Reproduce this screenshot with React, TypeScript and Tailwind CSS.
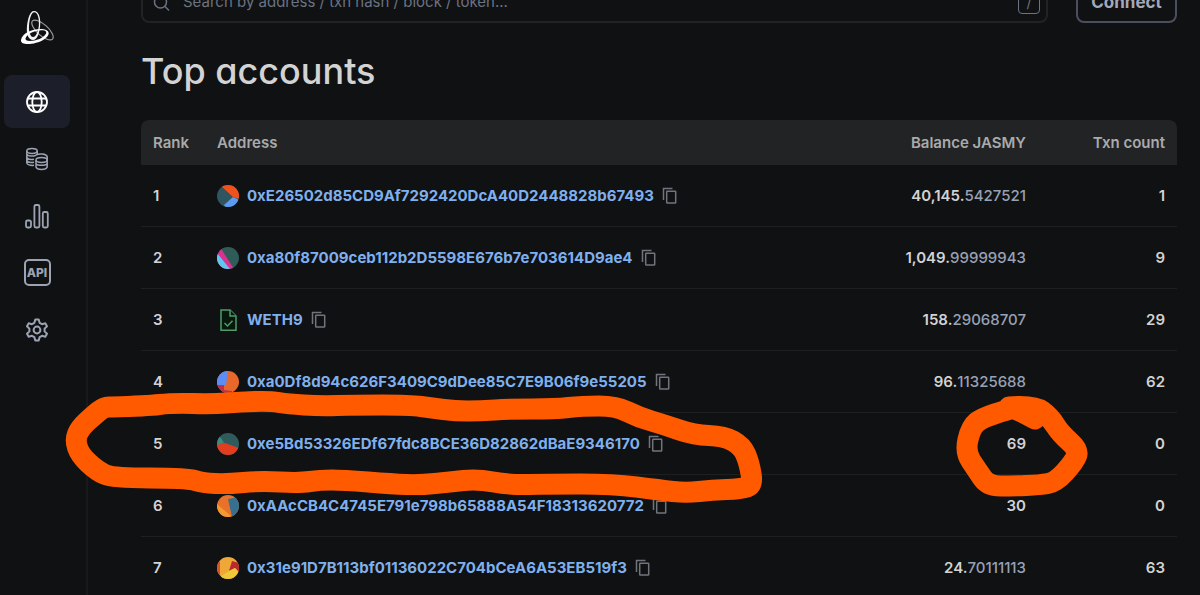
import type { ReactNode } from 'react'

type Slice = { d: string; fill: string }

type Account = {
  address: string
  whole: string
  fraction?: string
  txns: number
  base?: string
  slices?: Slice[]
}

const accounts: Account[] = [
  {
    address: '0xE26502d85CD9Af7292420DcA40D2448828b67493',
    whole: '40,145',
    fraction: '5427521',
    txns: 1,
    base: '#2f5560',
    slices: [
      { d: 'M3 0H22V14L16 12Z', fill: '#f1511b' },
      { d: 'M16 12L22 15V22H8L7 20Z', fill: '#5c9bf0' },
    ],
  },
  {
    address: '0xa80f87009ceb112b2D5598E676b7e703614D9ae4',
    whole: '1,049',
    fraction: '99999943',
    txns: 9,
    base: '#2f5b58',
    slices: [
      { d: 'M0 0H3L17 22H0Z', fill: '#d9328f' },
      { d: 'M0 6L13 22H0Z', fill: '#62c6f2' },
    ],
  },
  { address: 'WETH9', whole: '158', fraction: '29068707', txns: 29 },
  {
    address: '0xa0Df8d94c626F3409C9dDee85C7E9B06f9e55205',
    whole: '96',
    fraction: '11325688',
    txns: 62,
    base: '#e8672a',
    slices: [
      { d: 'M0 0H11L9 14H0Z', fill: '#5b8df5' },
      { d: 'M0 14H7V19L15 20V22H0Z', fill: '#c22f4b' },
    ],
  },
  {
    address: '0xe5Bd53326EDf67fdc8BCE36D82862dBaE9346170',
    whole: '69',
    txns: 0,
    base: '#2f5b5c',
    slices: [
      { d: 'M0 3L4 5L7 10L0 13Z', fill: '#3f8a7c' },
      { d: 'M0 12L8 10L22 15V22H0Z', fill: '#e33d20' },
    ],
  },
  {
    address: '0xAAcCB4C4745E791e798b65888A54F18313620772',
    whole: '30',
    txns: 0,
    base: '#e8722a',
    slices: [
      { d: 'M0 9L15 22H0Z', fill: '#f39a2e' },
      { d: 'M11 4L22 2V22H15Z', fill: '#37708f' },
    ],
  },
  {
    address: '0x31e91D7B113bf01136022C704bCeA6A53EB519f3',
    whole: '24',
    fraction: '70111113',
    txns: 63,
    base: '#efa738',
    slices: [
      { d: 'M0 5H3V18H0Z', fill: '#d9522c' },
      { d: 'M15 4L22 6V15L18 11L12 14Z', fill: '#b82a2e' },
      { d: 'M3 20L12 14L18 11L22 16V22H3Z', fill: '#f0c93a' },
    ],
  },
]

const rowMarker = [
  [112, 407], [147, 406], [172, 403], [213, 404], [240, 402], [270, 401], [288, 404], [320, 406],
  [355, 405], [410, 405], [432, 408], [455, 411], [480, 411], [510, 409], [555, 409], [582, 406],
  [616, 406], [638, 417], [665, 425], [694, 435], [724, 436], [742, 446], [749, 462], [753, 485],
  [741, 489], [712, 490], [686, 493], [660, 490], [613, 484], [547, 484], [510, 485], [477, 479],
  [450, 482], [420, 485], [393, 484], [343, 480], [320, 480], [300, 483], [260, 481], [227, 484],
  [203, 483], [187, 478], [113, 478], [97, 471], [80, 455], [75, 440], [80, 428], [93, 416], [104, 407], [113, 407],
]

const balanceMarker = [
  [1009, 407], [1034, 405], [1050, 417], [1060, 433], [1079, 450], [1074, 462], [1056, 482],
  [1040, 485], [1013, 486], [988, 486], [977, 470], [965, 452], [971, 427], [982, 418], [1007, 410],
  [1014, 408], [1035, 419],
]

function smooth(points: number[][]) {
  let d = `M${points[0][0]} ${points[0][1]}`
  for (let i = 1; i < points.length - 1; i++) {
    const [x, y] = points[i]
    const [nx, ny] = points[i + 1]
    d += `Q${x} ${y} ${(x + nx) / 2} ${(y + ny) / 2}`
  }
  const last = points[points.length - 1]
  return `${d}L${last[0]} ${last[1]}`
}

function Logo() {
  return (
    <svg width="36" height="36" viewBox="0 0 36 36" fill="none">
      <ellipse cx="23.500" cy="20" rx="5.500" ry="13.500" stroke="#9a9c9f" strokeWidth="1.2" transform="rotate(-48 23.500 20)" />
      <path
        fillRule="evenodd"
        fill="#f2f2f2"
        d="M15 1C20 1 22 8 21 17C20 24 18 30 14 30C10 30 7 25 8 16C9 8 11 1 15 1ZM15.300 2.200C12.500 2.200 10.500 8 10 16C9.600 22 11.500 27 14 27C17 27 19 22 19.800 16C20.500 8 18.500 2.200 15.300 2.200Z"
      />
      <path
        fillRule="evenodd"
        fill="#fff"
        d="M2 30C3 23 14 18.500 23 19C31 19.500 32 25 25 29.500C17 34.500 1 36.500 2 30ZM6.500 28.500C6 32 14 31.500 20.500 29C27 26 30 21 24 20.300C17 19.500 7.500 24 6.500 28.500Z"
      />
    </svg>
  )
}

function GlobeIcon() {
  return (
    <svg width="24" height="24" viewBox="0 0 24 24" fill="none" stroke="currentColor" strokeWidth="1.8">
      <circle cx="12" cy="12" r="10" />
      <ellipse cx="12" cy="12" rx="4.7" ry="10" />
      <path d="M3 8.5H21M3 15.5H21" />
    </svg>
  )
}

function CoinsIcon() {
  return (
    <svg width="24" height="24" viewBox="0 0 24 24" fill="none" stroke="currentColor" strokeWidth="1.5">
      <ellipse cx="7" cy="4" rx="5.2" ry="2.4" />
      <path d="M1.8 4V16C2 17.5 5 18.7 9 18.3M12.2 4V8M1.8 7C2.5 9.2 7 9.8 11 8.2M1.8 10.200C2.5 12.200 6 12.800 9 12.200M1.8 13.200C2.5 15.200 6 15.800 9 15.200" />
      <path d="M11 8.2C14 6.2 21 6.5 22.2 9.5V13" />
      <ellipse cx="16.6" cy="13" rx="5.6" ry="2.4" />
      <path d="M11 13V20C12 23.2 21 23.2 22.2 20V13M11 16.4C12 19 21 19 22.2 16.4" />
    </svg>
  )
}

function ChartIcon() {
  return (
    <svg width="26" height="26" viewBox="0 0 26 26" fill="none" stroke="currentColor" strokeWidth="1.8">
      <rect x="2" y="17.5" width="5" height="7" rx="1.5" />
      <rect x="10.4" y="2" width="5" height="22.5" rx="1.5" />
      <rect x="18.8" y="9" width="5" height="15.5" rx="1.5" />
    </svg>
  )
}

function ApiIcon() {
  return (
    <span className="flex size-[27px] items-center justify-center rounded-[5px] border-2 border-current text-xs leading-none font-extrabold">
      API
    </span>
  )
}

function GearIcon() {
  return (
    <svg width="24" height="24" viewBox="0 0 24 24" fill="none" stroke="currentColor" strokeWidth="2" strokeLinejoin="round">
      <path d="M10.3 1.5H13.7L14.6 4.8L17 6.2L20.3 5.3L22 8.2L19.6 10.6V13.4L22 15.8L20.3 18.7L17 17.8L14.6 19.2L13.7 22.5H10.3L9.4 19.2L7 17.8L3.7 18.7L2 15.8L4.4 13.4V10.6L2 8.2L3.7 5.3L7 6.2L9.4 4.8Z" />
      <circle cx="12" cy="12" r="3.4" />
    </svg>
  )
}

function CopyIcon() {
  return (
    <svg width="16" height="18" viewBox="0 0 16 18" fill="none" stroke="currentColor" strokeWidth="1.5">
      <path d="M1.5 13V1.5H10.5" />
      <rect x="4.7" y="4.3" width="9" height="11.7" rx="0.5" />
    </svg>
  )
}

function ContractIcon() {
  return (
    <svg width="22" height="24" viewBox="0 0 22 24" fill="#06170c" stroke="#4f9c6a" strokeWidth="1.5">
      <path d="M4 2H13L19 8V22.3H4Z" />
      <path d="M13 2V8H19" />
      <path d="M7.5 15L10.5 18L15.5 12.8" fill="none" />
    </svg>
  )
}

function Identicon({ id, base, slices }: { id: string; base: string; slices: Slice[] }) {
  return (
    <svg width="22" height="22" viewBox="0 0 22 22">
      <clipPath id={id}>
        <circle cx="11" cy="11" r="11" />
      </clipPath>
      <g clipPath={`url(#${id})`}>
        <rect width="22" height="22" fill={base} />
        {slices.map((s) => (
          <path key={s.d} d={s.d} fill={s.fill} />
        ))}
      </g>
    </svg>
  )
}

function NavItem({ label, active, children }: { label: string; active?: boolean; children: ReactNode }) {
  return (
    <a
      href="#"
      aria-label={label}
      className={`flex h-[53px] items-center justify-center rounded-lg ${active ? 'bg-[#1c1f2a] text-white' : 'text-[#9ca3b4]'}`}
    >
      {children}
    </a>
  )
}

export default function App() {
  return (
    <div className="relative flex h-screen overflow-hidden bg-[#101112] font-['Inter',sans-serif] text-[#d3d3d4]">
      <aside className="w-[88px] shrink-0 border-r-2 border-[#18191b] pt-2.5 pr-4 pl-1">
        <a href="#" aria-label="Home" className="mb-[29px] flex justify-center">
          <Logo />
        </a>
        <nav className="flex flex-col gap-1">
          <NavItem label="Blockchain" active><GlobeIcon /></NavItem>
          <NavItem label="Tokens"><CoinsIcon /></NavItem>
          <NavItem label="Charts and stats"><ChartIcon /></NavItem>
          <NavItem label="API"><ApiIcon /></NavItem>
          <NavItem label="Settings"><GearIcon /></NavItem>
        </nav>
      </aside>

      <main className="min-w-0 flex-1 pr-[23px] pl-[53px]">
        <div className="-mt-[18px] flex gap-7">
          <label className="flex h-[41px] flex-1 items-center rounded-lg border-2 border-[#222325] pr-1.5 pl-2.5">
            <svg width="18" height="18" viewBox="0 0 18 18" fill="none" stroke="#6b7382" strokeWidth="1.5">
              <circle cx="7.5" cy="8" r="6" />
              <path d="M12 12.5L16 16.5" />
            </svg>
            <input
              type="text"
              aria-label="Search"
              placeholder="Search by address / txn hash / block / token..."
              className="ml-3 min-w-0 flex-1 bg-transparent text-[15px] outline-none placeholder:text-[#6b7382]"
            />
            <kbd className="flex size-[22px] items-center justify-center rounded-sm border border-[#6b7382] font-['Inter',sans-serif] text-sm text-[#6b7382]">
              /
            </kbd>
          </label>
          <button className="h-[41px] w-[101px] rounded-lg border-2 border-[#4a4f5e] text-[17px] font-bold text-[#a3a9ba]">
            Connect
          </button>
        </div>

        <h1 className="mt-7 mb-[29px] text-4xl leading-10 font-medium [font-feature-settings:'cv11']">Top accounts</h1>

        <table className="w-full table-fixed border-separate border-spacing-0">
          <colgroup>
            <col className="w-16" />
            <col />
            <col className="w-60" />
            <col className="w-[139px]" />
          </colgroup>
          <thead>
            <tr className="h-[45px] text-[15px] leading-6 text-[#a9aaab]">
              <th className="rounded-tl-lg bg-[#222325] px-3 text-left font-semibold">Rank</th>
              <th className="bg-[#222325] px-3 text-left font-semibold">Address</th>
              <th className="bg-[#222325] px-3 text-right font-semibold">Balance JASMY</th>
              <th className="rounded-tr-lg bg-[#222325] px-3 text-right font-semibold">Txn count</th>
            </tr>
          </thead>
          <tbody>
            {accounts.map((a, i) => (
              <tr key={a.address} className="h-[62px] text-[15px] leading-6 font-semibold [&>td]:border-b [&>td]:border-[#1e1f21] [&>td]:px-3">
                <td>{i + 1}</td>
                <td>
                  <div className="flex items-center gap-2">
                    {a.slices && a.base ? (
                      <Identicon id={`identicon-${i}`} base={a.base} slices={a.slices} />
                    ) : (
                      <ContractIcon />
                    )}
                    <a href="#" className="font-bold text-[#7fb0ee]">{a.address}</a>
                    <button aria-label="Copy address" className="text-[#70747d]"><CopyIcon /></button>
                  </div>
                </td>
                <td className="text-right">
                  {a.whole}
                  {a.fraction && (
                    <>
                      .<span className="font-medium text-[#98a1b5]">{a.fraction}</span>
                    </>
                  )}
                </td>
                <td className="text-right">{a.txns}</td>
              </tr>
            ))}
          </tbody>
        </table>
      </main>

      {/* hand-drawn highlights over row 5 */}
      <svg
        className="pointer-events-none absolute top-0 left-0"
        width="1200"
        height="595"
        fill="none"
        stroke="#ff5a00"
        strokeWidth="21"
        strokeLinecap="round"
        strokeLinejoin="round"
      >
        <path d={smooth(rowMarker)} />
        <path d={smooth(balanceMarker)} />
      </svg>
    </div>
  )
}
